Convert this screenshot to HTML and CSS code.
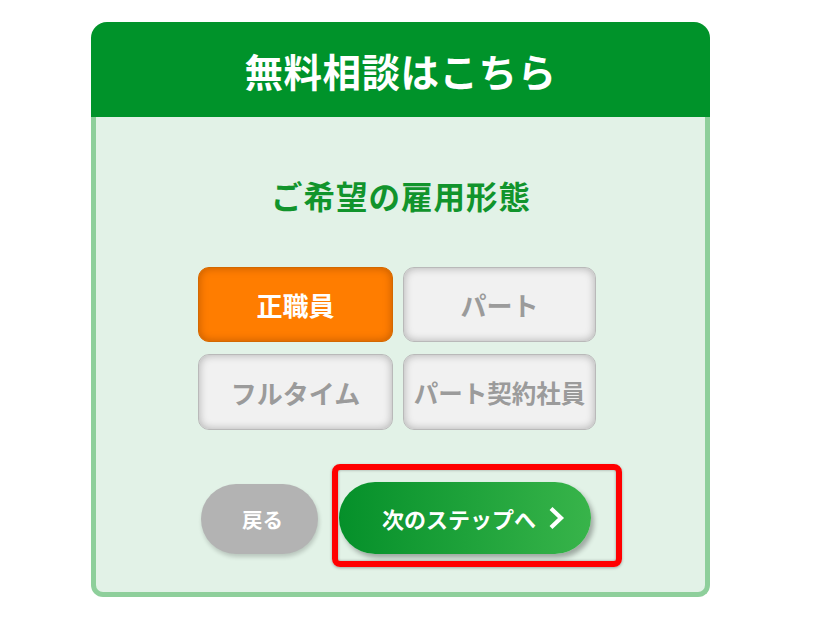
FILE: index.html
```html
<!DOCTYPE html>
<html lang="ja">
<head>
<meta charset="utf-8">
<title>無料相談はこちら</title>
<link rel="stylesheet" href="styles.css">
</head>
<body>
<div class="card">
  <div class="card-head"><h2 class="card-title">無料相談はこちら</h2></div>
  <div class="card-body">
    <h3 class="question">ご希望の雇用形態</h3>
    <div class="options">
      <button class="opt opt-active">正職員</button>
      <button class="opt">パート</button>
      <button class="opt">フルタイム</button>
      <button class="opt opt-long">パート契約社員</button>
    </div>
    <div class="actions">
      <button class="btn-back">戻る</button>
      <span class="highlight">
        <button class="btn-next">次のステップへ
          <svg class="chev" width="17" height="24" viewBox="0 0 17 24"><path d="M3 2.5 L13 12 L3 21.5" fill="none" stroke="#fff" stroke-width="4.2" stroke-linejoin="miter"/></svg>
        </button>
      </span>
    </div>
  </div>
</div>
</body>
</html>
```

FILE: styles.css
```css
* { box-sizing: border-box; }
body {
  margin: 0;
  background: #fff;
  font-family: "Noto Sans CJK JP", "Noto Sans", sans-serif;
}
.card {
  width: 619px;
  margin: 22px 0 0 91px;
}
.card-head {
  height: 95px;
  background: #00932a;
  border-radius: 16px 16px 0 0;
  display: flex;
  align-items: center;
  justify-content: center;
}
.card-title {
  margin: 0;
  color: #fff;
  font-size: 38.5px;
  font-weight: 700;
  line-height: 1;
  letter-spacing: 0.5px;
  padding-top: 2px;
}
.card-body {
  height: 480px;
  background: #e2f2e7;
  border: 5px solid #8ecf9b;
  border-top: 0;
  border-radius: 0 0 12px 12px;
  padding-top: 62px;
}
.question {
  margin: 0;
  text-align: center;
  color: #11942c;
  font-size: 31.5px;
  line-height: 32px;
  font-weight: 700;
  letter-spacing: 1px;
  padding-left: 1px;
}
.options {
  margin: 56px 0 0 102px;
  display: grid;
  grid-template-columns: 195px 193px;
  grid-template-rows: 75px 76px;
  column-gap: 10px;
  row-gap: 12px;
}
.opt {
  font-family: inherit;
  font-size: 26px;
  font-weight: 700;
  color: #9b9b9b;
  background: #f1f1f1;
  border: 1px solid #b9b9b9;
  border-radius: 11px;
  box-shadow: inset 0 0 8px rgba(0,0,0,0.28);
  padding: 0;
  white-space: nowrap;
}
.opt-long { font-size: 24.5px; }
.opt-active {
  background: #ff7d00;
  color: #fff;
  border-color: #d36800;
  box-shadow: inset 0 0 8px rgba(120,50,0,0.45);
}
.actions {
  margin: 52px 0 0 105px;
  display: flex;
  align-items: center;
  gap: 21px;
}
.btn-back {
  width: 117px;
  height: 70px;
  border: 0;
  border-radius: 35px;
  background: #b3b3b3;
  color: #fff;
  font-family: inherit;
  font-size: 20.5px;
  font-weight: 700;
  box-shadow: 1px 3px 4px rgba(0,0,0,0.18);
  padding: 0 0 0 6px;
  margin-top: 2px;
}
.highlight {
  position: relative;
  display: block;
}
.highlight::after {
  content: "";
  position: absolute;
  top: -18px;
  left: -7px;
  right: -31px;
  bottom: -13px;
  border: 6px solid #ff0000;
  border-radius: 8px;
  box-shadow: inset 0 0 3px rgba(0,0,0,0.35), 0 1px 3px rgba(0,0,0,0.3);
  pointer-events: none;
}
.btn-next {
  width: 252px;
  height: 72px;
  border: 0;
  border-radius: 36px;
  background: linear-gradient(to right, #05902a 0%, #1ea23a 50%, #38b44a 100%);
  color: #fff;
  font-family: inherit;
  font-size: 22px;
  font-weight: 700;
  display: flex;
  align-items: center;
  padding: 0 0 0 43px;
  gap: 12px;
  box-shadow: 3px 4px 5px rgba(0,0,0,0.3);
}
.chev { display: block; }
```
